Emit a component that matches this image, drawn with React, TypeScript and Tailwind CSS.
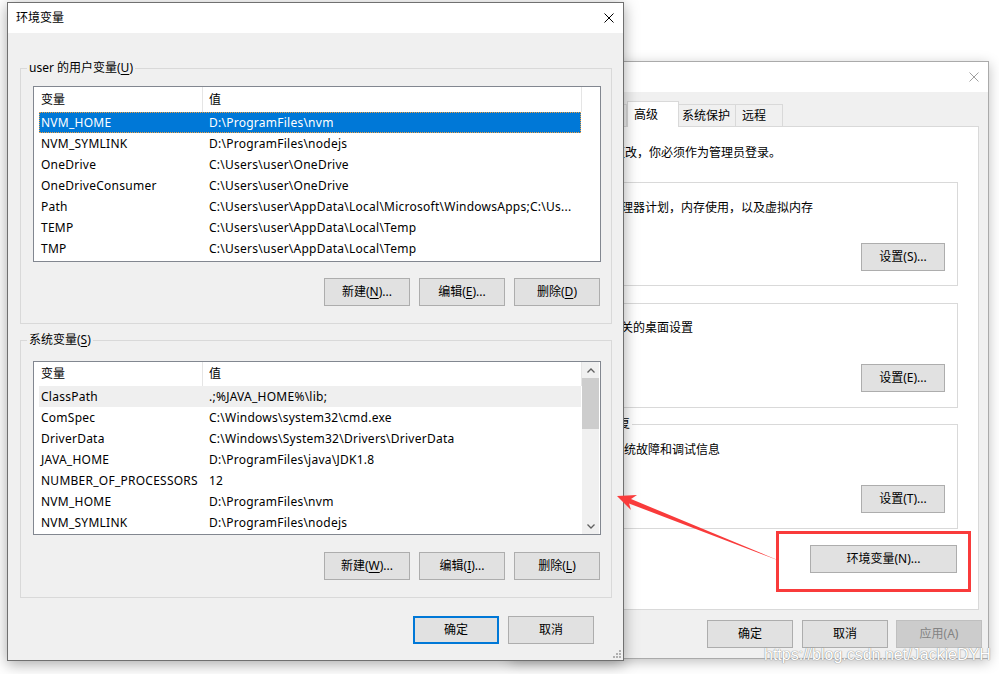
import type { ReactNode } from "react";
import clsx from "clsx";

type Row = [string, string];

const userVars: Row[] = [
  ["NVM_HOME", "D:\\ProgramFiles\\nvm"],
  ["NVM_SYMLINK", "D:\\ProgramFiles\\nodejs"],
  ["OneDrive", "C:\\Users\\user\\OneDrive"],
  ["OneDriveConsumer", "C:\\Users\\user\\OneDrive"],
  ["Path", "C:\\Users\\user\\AppData\\Local\\Microsoft\\WindowsApps;C:\\Us..."],
  ["TEMP", "C:\\Users\\user\\AppData\\Local\\Temp"],
  ["TMP", "C:\\Users\\user\\AppData\\Local\\Temp"],
];

const sysVars: Row[] = [
  ["ClassPath", ".;%JAVA_HOME%\\lib;"],
  ["ComSpec", "C:\\Windows\\system32\\cmd.exe"],
  ["DriverData", "C:\\Windows\\System32\\Drivers\\DriverData"],
  ["JAVA_HOME", "D:\\ProgramFiles\\java\\JDK1.8"],
  ["NUMBER_OF_PROCESSORS", "12"],
  ["NVM_HOME", "D:\\ProgramFiles\\nvm"],
  ["NVM_SYMLINK", "D:\\ProgramFiles\\nodejs"],
];

// accelerator letter
const K = ({ children }: { children: ReactNode }) => (
  <span className="underline underline-offset-[2px]">{children}</span>
);

function Button({
  children,
  className = "w-[86px]",
  variant = "normal",
}: {
  children: ReactNode;
  className?: string;
  variant?: "normal" | "focused" | "disabled";
}) {
  return (
    <div
      className={clsx(
        "flex h-[28px] shrink-0 items-center justify-center whitespace-nowrap",
        variant === "normal" && "border border-[#adadad] bg-[#e1e1e1]",
        variant === "focused" && "border-2 border-[#0078d7] bg-[#e1e1e1]",
        variant === "disabled" && "border border-[#bfbfbf] bg-[#cccccc] text-[#838383]",
        className,
      )}
    >
      <span className="whitespace-nowrap">{children}</span>
    </div>
  );
}

function CloseX({ color }: { color: string }) {
  return (
    <svg width="10" height="10" viewBox="0 0 10 10" className="shrink-0">
      <path d="M0.5 0.5L9.5 9.5M9.5 0.5L0.5 9.5" stroke={color} strokeWidth="1" fill="none" />
    </svg>
  );
}

function GroupBox({
  label,
  labelBg,
  className,
  children,
}: {
  label: ReactNode;
  labelBg: string;
  className?: string;
  children: ReactNode;
}) {
  return (
    <div className={clsx("relative flex flex-col border border-[#d9d9d9]", className)}>
      <span className={clsx("absolute -top-[9px] left-[6px] px-[2px] whitespace-nowrap", labelBg)}>
        {label}
      </span>
      {children}
    </div>
  );
}

function Chevron({ up }: { up?: boolean }) {
  return (
    <svg width="8" height="5" viewBox="0 0 8 5">
      <path
        d={up ? "M0.5 4.5L4 1L7.5 4.5" : "M0.5 0.5L4 4L7.5 0.5"}
        stroke="#606060"
        strokeWidth="1.3"
        fill="none"
      />
    </svg>
  );
}

function ListBox({
  rows,
  headerH,
  heightClass,
  selected,
  hovered,
  scrollbar,
}: {
  rows: Row[];
  headerH: string;
  heightClass: string;
  selected?: number;
  hovered?: number;
  scrollbar?: boolean;
}) {
  return (
    <div className={clsx("flex w-[568px] shrink-0 border border-[#828790] bg-white", heightClass)}>
      <div className="flex w-[548px] flex-col overflow-hidden">
        <div className={clsx("flex w-[548px] shrink-0 border-r border-[#e5e5e5]", headerH)}>
          <div className="flex w-[169px] items-center border-r border-[#e5e5e5] pl-[7px]">变量</div>
          <div className="flex items-center pl-[6px]">值</div>
        </div>
        {rows.map(([k, v], i) => (
          <div
            key={k + i}
            className={clsx(
              "ml-[5px] flex h-[21px] w-[542px] shrink-0 items-center tracking-[0.25px]",
              i === selected &&
                "bg-[#0078d7] text-white outline-1 -outline-offset-1 outline-[#f0a040] outline-dotted",
              i === hovered && "bg-[#efefef]",
            )}
          >
            <div className="w-[170px] shrink-0 overflow-hidden whitespace-nowrap pl-[2px]">{k}</div>
            <div className="overflow-hidden whitespace-nowrap">{v}</div>
          </div>
        ))}
      </div>
      {scrollbar && (
        <div className="flex w-[17px] flex-col bg-[#f0f0f0]">
          <div className="flex h-[16px] items-center justify-center">
            <Chevron up />
          </div>
          <div className="h-[51px] bg-[#cdcdcd]" />
          <div className="flex-1" />
          <div className="flex h-[16px] items-center justify-center">
            <Chevron />
          </div>
        </div>
      )}
    </div>
  );
}

function EnvDialog() {
  return (
    <div className="absolute left-[7px] top-[2px] z-20 flex h-[659px] w-[617px] flex-col border border-[#707070] bg-[#f0f0f0] shadow-[0_3px_14px_rgba(0,0,0,0.35)]">
      <div className="flex h-[30px] shrink-0 items-center justify-between bg-white pl-[8px] pr-[9px]">
        <span>环境变量</span>
        <CloseX color="#000" />
      </div>

      <div className="flex flex-col pl-[12px] pr-[11px]">
        {/* 用户变量 */}
        <GroupBox
          labelBg="bg-[#f0f0f0]"
          className="mt-[35px] h-[256px] pl-[12px] pr-[10px] pt-[17px]"
          label={
            <>
              user 的用户变量(<K>U</K>)
            </>
          }
        >
          <ListBox rows={userVars} headerH="h-[25px]" heightClass="h-[176px]" selected={0} />
          <div className="mt-[16px] flex justify-end gap-[9px] pr-[1px]">
            <Button>
              新建(<K>N</K>)...
            </Button>
            <Button>
              编辑(<K>E</K>)...
            </Button>
            <Button>
              删除(<K>D</K>)
            </Button>
          </div>
        </GroupBox>

        {/* 系统变量 */}
        <GroupBox
          labelBg="bg-[#f0f0f0]"
          className="mt-[16px] h-[258px] pl-[12px] pr-[10px] pt-[20px]"
          label={
            <>
              系统变量(<K>S</K>)
            </>
          }
        >
          <ListBox rows={sysVars} headerH="h-[24px]" heightClass="h-[174px]" hovered={0} scrollbar />
          <div className="mt-[17px] flex justify-end gap-[9px] pr-[1px]">
            <Button>
              新建(<K>W</K>)...
            </Button>
            <Button>
              编辑(<K>I</K>)...
            </Button>
            <Button>
              删除(<K>L</K>)
            </Button>
          </div>
        </GroupBox>

        <div className="mt-[18px] flex justify-end gap-[9px] pr-[18px]">
          <Button variant="focused">确定</Button>
          <Button>取消</Button>
        </div>
      </div>

      {/* resize grip */}
      <svg className="absolute bottom-[2px] right-[2px]" width="9" height="9" viewBox="0 0 9 9">
        <rect x="7" y="1" width="2" height="2" fill="#b0b0b0" />
        <rect x="4" y="4" width="2" height="2" fill="#b0b0b0" />
        <rect x="7" y="4" width="2" height="2" fill="#b0b0b0" />
        <rect x="1" y="7" width="2" height="2" fill="#b0b0b0" />
        <rect x="4" y="7" width="2" height="2" fill="#b0b0b0" />
        <rect x="7" y="7" width="2" height="2" fill="#b0b0b0" />
      </svg>
    </div>
  );
}

function SysPropsDialog() {
  const tabs = [
    { label: "计算机名", w: "w-[60px] border-l" },
    { label: "硬件", w: "w-[46px]" },
    { label: "高级", w: "w-[52px]", active: true },
    { label: "系统保护", w: "w-[57px] pl-[3px]" },
    { label: "远程", w: "w-[47px] pl-[6px]" },
  ];

  return (
    <div className="absolute left-[510px] top-[61px] z-10 flex h-[598px] w-[479px] flex-col border border-[#aaaaaa] bg-[#f0f0f0] shadow-[0_3px_12px_rgba(0,0,0,0.25)]">
      <div className="flex h-[30px] shrink-0 items-center justify-between bg-white pl-[8px] pr-[9px]">
        <span>系统属性</span>
        <CloseX color="#a0a0a0" />
      </div>

      <div className="flex flex-col pl-[8px] pr-[9px] pt-[9px]">
        {/* tabs */}
        <div className="flex h-[25px] items-end pl-[2px]">
          {tabs.map((t) =>
            t.active ? (
              <div
                key={t.label}
                className={clsx(
                  "relative z-10 -mb-px flex h-[26px] items-center border-x border-t border-[#d9d9d9] bg-white pl-[6px]",
                  t.w,
                )}
              >
                {t.label}
              </div>
            ) : (
              <div
                key={t.label}
                className={clsx(
                  "flex h-[22px] items-center justify-start border-r border-t border-[#d9d9d9] bg-[#f0f0f0]",
                  t.w,
                )}
              >
                {t.label}
              </div>
            ),
          )}
        </div>

        {/* tab panel */}
        <div className="flex h-[484px] w-[460px] flex-col border border-[#d9d9d9] bg-white pl-[17px] pr-[20px] pt-[18px]">
          <div className="ml-[4px] whitespace-nowrap">要进行大多数更改，你必须作为管理员登录。</div>

          <GroupBox labelBg="bg-white" className="mt-[21px] pl-[11px] pr-[12px] pt-[17px] pb-[14px]" label="性能">
            <div className="whitespace-nowrap">视觉效果，处理器计划，内存使用，以及虚拟内存</div>
            <div className="mt-[27px] flex justify-end">
              <Button className="w-[84px]">设置(S)...</Button>
            </div>
          </GroupBox>

          <GroupBox labelBg="bg-white" className="mt-[17px] pl-[11px] pr-[12px] pt-[16px] pb-[15px]" label="用户配置文件">
            <div className="whitespace-nowrap">与登录帐户相关的桌面设置</div>
            <div className="mt-[28px] flex justify-end">
              <Button className="w-[84px]">设置(E)...</Button>
            </div>
          </GroupBox>

          <GroupBox labelBg="bg-white" className="mt-[16px] pl-[14px] pr-[12px] pt-[17px] pb-[15px]" label="启动和故障恢复">
            <div className="whitespace-nowrap">系统启动、系统故障和调试信息</div>
            <div className="mt-[27px] flex justify-end">
              <Button className="w-[84px]">设置(T)...</Button>
            </div>
          </GroupBox>

          <div className="mt-[16px] flex justify-end pr-[1px]">
            <Button className="w-[147px]">环境变量(N)...</Button>
          </div>
        </div>
      </div>

      <div className="mt-[10px] flex justify-end pr-[6px]">
        <Button>确定</Button>
        <Button className="ml-[9px] w-[86px]">取消</Button>
        <Button className="ml-[8px] w-[86px]" variant="disabled">
          应用(A)
        </Button>
      </div>
    </div>
  );
}

export default function App() {
  return (
    <div className="relative h-[674px] w-[999px] overflow-hidden bg-white text-[12px] leading-[16px] text-black [font-family:'Noto_Sans','Noto_Sans_CJK_SC',sans-serif]">
      <SysPropsDialog />
      <EnvDialog />

      {/* annotation: red box + arrow */}
      <div className="absolute left-[776px] top-[531px] z-30 h-[61px] w-[195px] border-[3px] border-[#f93b3b]" />
      <svg className="pointer-events-none absolute inset-0 z-30" width="999" height="674" viewBox="0 0 999 674">
        <polygon
          points="617,496 637,495 631,499 780,561 629,503.5 631,510"
          fill="#f93b3b"
        />
      </svg>

      {/* watermark */}
      <div className="absolute left-[764px] top-[645px] z-40 whitespace-nowrap text-[16px] leading-[20px] text-white [font-family:'Liberation_Sans',Arial,sans-serif] [text-shadow:0_0_1px_#8a8a8a,0_0_1px_#8a8a8a]">
        https://blog.csdn.net/JackieDYH
      </div>
    </div>
  );
}
